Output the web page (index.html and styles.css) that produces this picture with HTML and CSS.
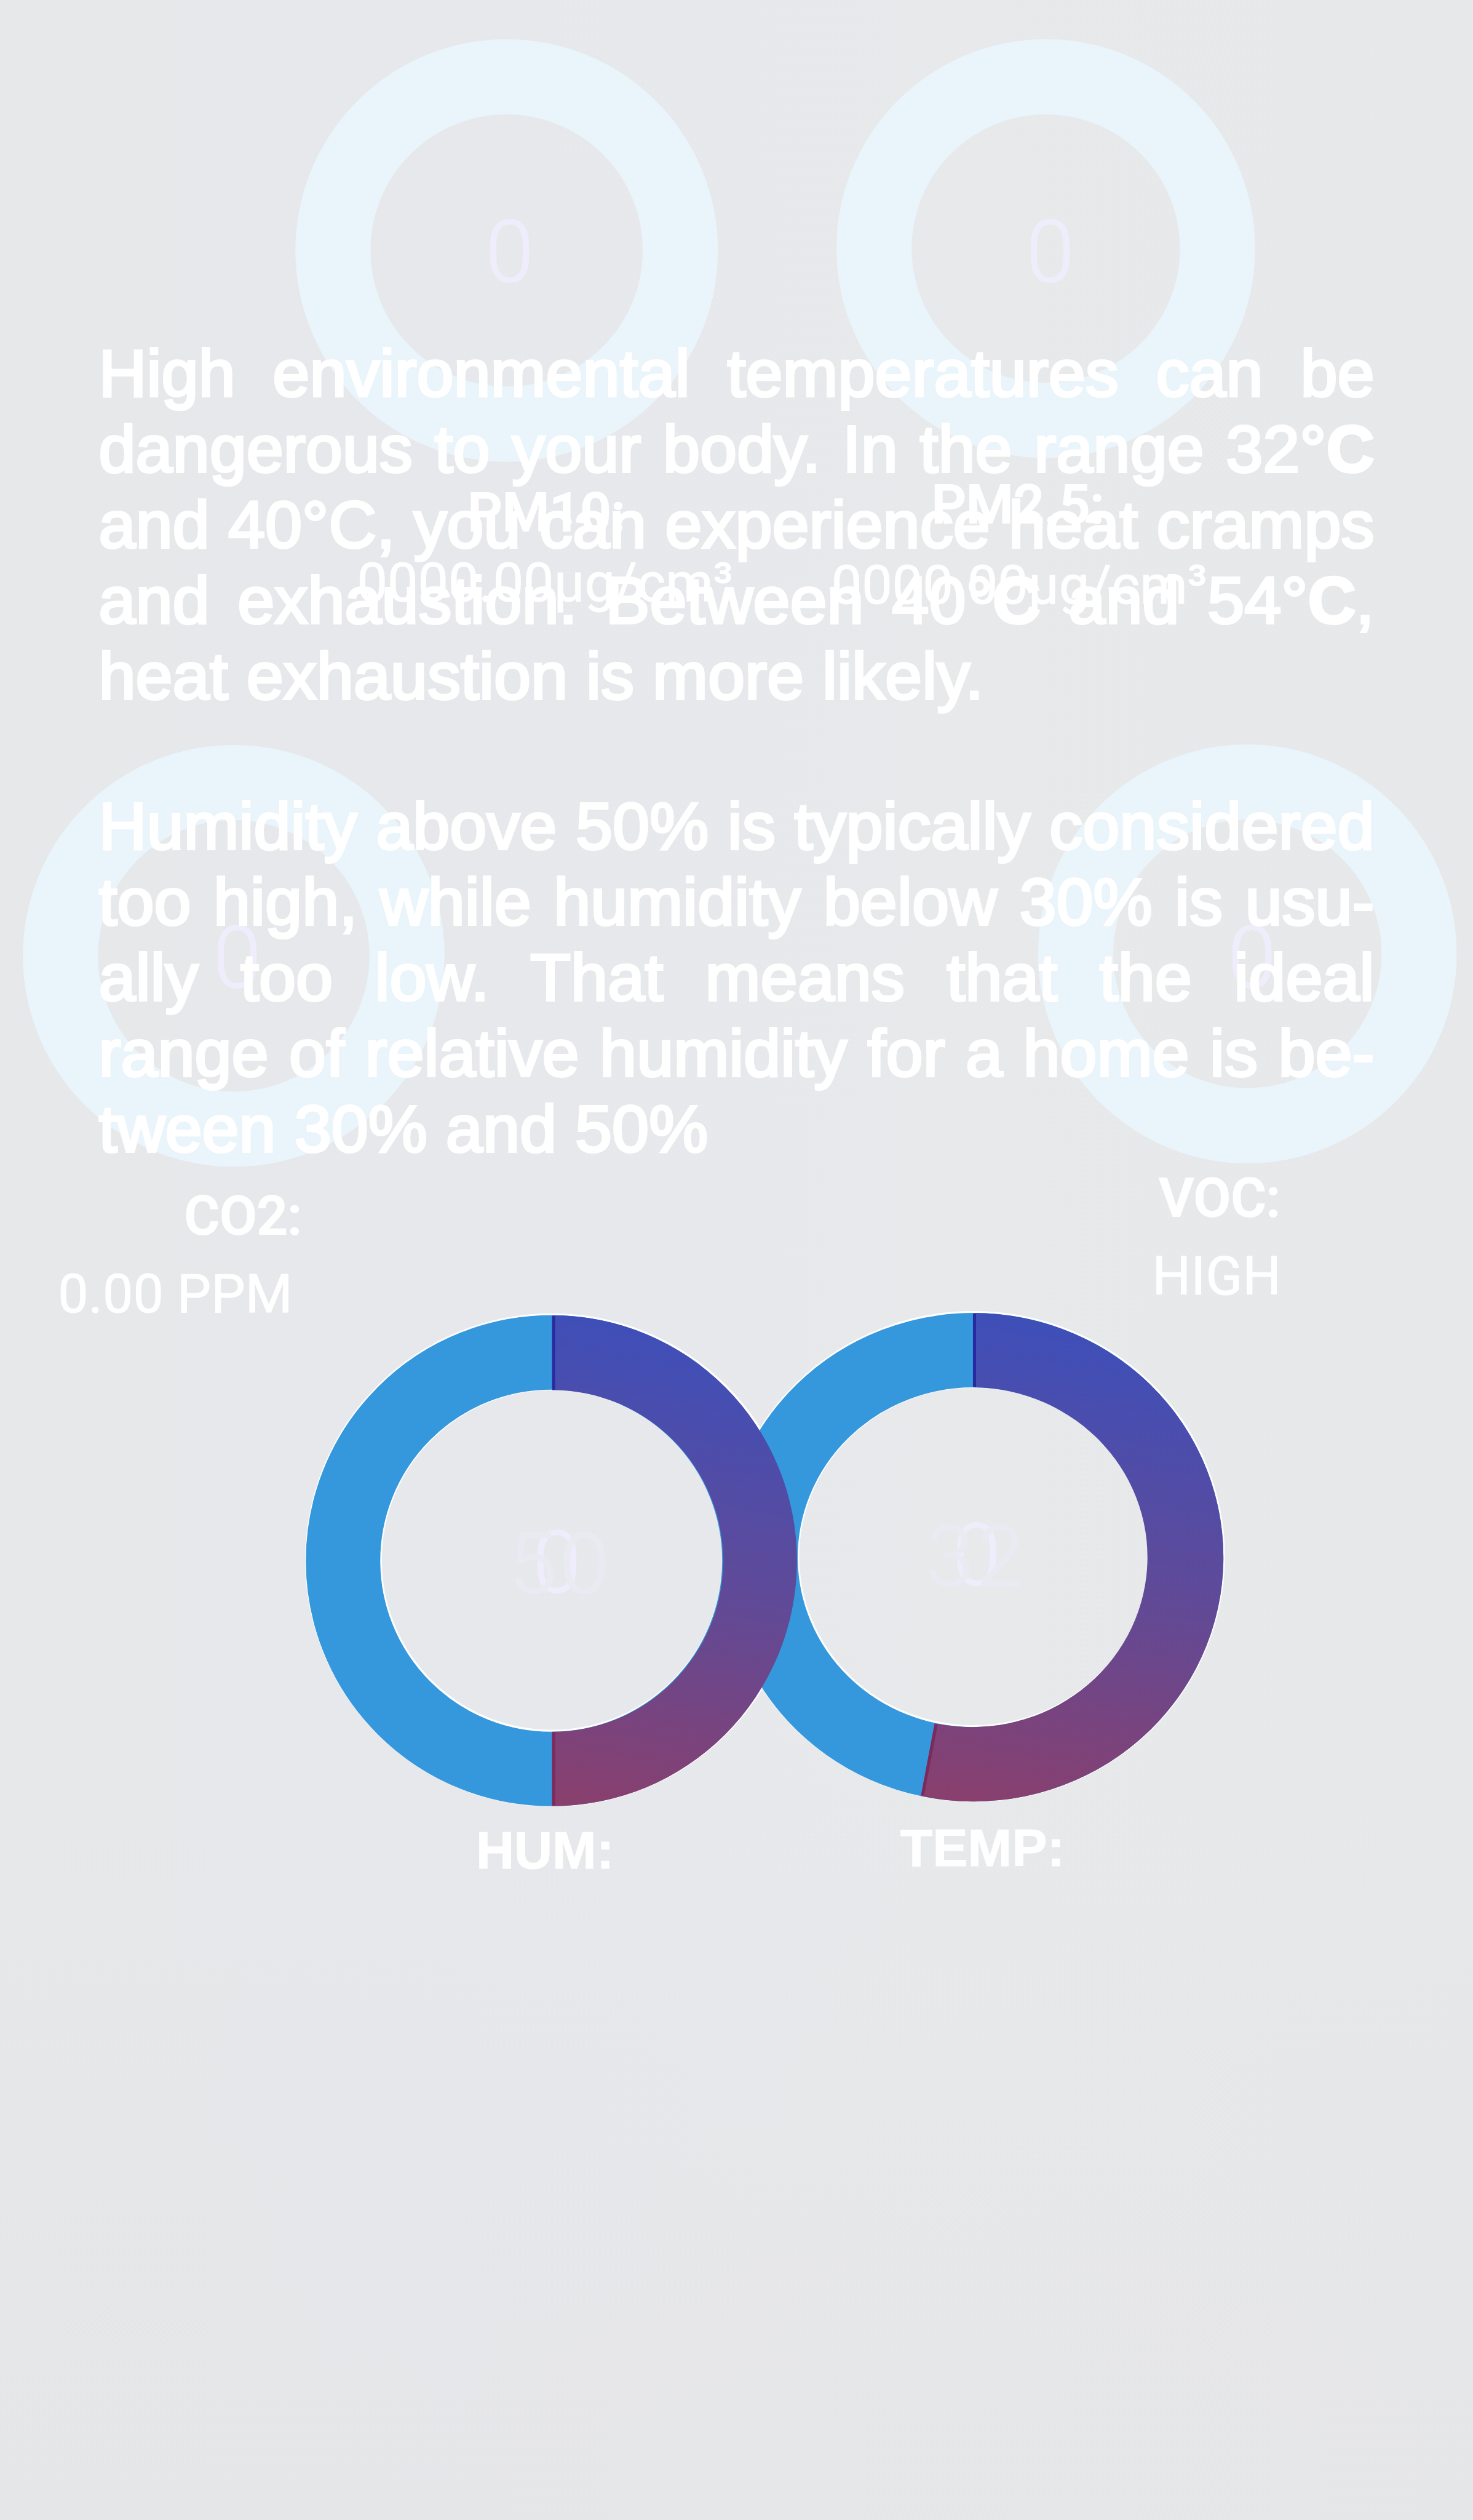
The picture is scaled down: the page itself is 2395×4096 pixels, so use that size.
FILE: index.html
```html
<!DOCTYPE html>
<html lang="en">
<head>
<meta charset="utf-8">
<title>Environment monitor</title>
<meta name="viewport" content="width=device-width, initial-scale=1">
<link rel="stylesheet" href="styles.css">
</head>
<body>
<main class="screen">
  <svg class="gauges" viewBox="0 0 3800 6500" aria-hidden="true">
    <defs>
      <linearGradient id="level" x1="0.1" y1="0" x2="0" y2="1">
        <stop offset="0" stop-color="#3f4fb8"/>
        <stop offset="0.5" stop-color="#604a98"/>
        <stop offset="1" stop-color="#8a3f6c"/>
      </linearGradient>
    </defs>
    <g class="pale">
      <circle cx="1307" cy="646" r="448"/>
      <circle cx="2698" cy="641" r="443"/>
      <circle cx="603" cy="2465" r="447"/>
      <circle cx="3218" cy="2460" r="443"/>
    </g>
    <g class="halo">
      <ellipse cx="2512" cy="4014" rx="549" ry="534"/>
      <ellipse cx="1424" cy="4023" rx="538" ry="537"/>
    </g>
    <ellipse class="track" cx="2511" cy="4016" rx="549" ry="534"/>
    <path fill="url(#level)" d="M2511 3386A645 630 0 1 1 2376 4632L2411 4444A453 438 0 1 0 2511 3578Z"/>
    <path class="seam" d="M2514 3389V3577"/>
    <path class="seam-end" d="M2380 4630L2415 4447"/>
    <ellipse class="track" cx="1422" cy="4025" rx="537" ry="537"/>
    <path fill="url(#level)" d="M1425 3392A631 633 0 0 1 1425 4658V4466A440 440 0 0 0 1425 3585Z"/>
    <path class="seam" d="M1428 3394V3584"/>
    <path class="seam-end" d="M1428 4467V4656"/>
  </svg>

  <section class="readings" aria-label="Sensors">
    <span class="zero pm10-zero">0</span>
    <span class="zero pm25-zero">0</span>
    <span class="zero co2-zero">0</span>
    <span class="zero voc-zero">0</span>
    <span class="zero hum-zero">0</span>
    <span class="zero temp-zero">0</span>
    <span class="level hum-level">50</span>
    <span class="level temp-level">32</span>
    <b class="name pm10-name">PM10:</b>
    <span class="value pm10-value">0000.00µg/cm³</span>
    <b class="name pm25-name">PM2.5:</b>
    <span class="value pm25-value">0000.00µg/cm³</span>
    <b class="name co2-name">CO2:</b>
    <span class="value co2-value">0.00 PPM</span>
    <b class="name voc-name">VOC:</b>
    <span class="value voc-value">HIGH</span>
    <b class="title hum-title">HUM:</b>
    <b class="title temp-title">TEMP:</b>
  </section>

  <article class="advice">
    <p>High environmental temperatures can be dangerous to your body. In the range 32°<b>C</b> and 40°C, you can experience heat cramps and exhaustion. Between 40°<b>C</b> and 54°<b>C</b>, heat exhaustion is more likely.</p>
    <p>Humidity above 50% is typically considered too high, while humidity below 30% is usu&shy;ally too low. That means that the ideal range of relative humidity for a home is be&shy;tween 30% and 50%</p>
  </article>
</main>
</body>
</html>
```
FILE: styles.css
```css
* { box-sizing: border-box; }

body {
  margin: 0;
  background: #e7e9eb;
}

.screen {
  position: relative;
  background:
    linear-gradient(180deg, transparent 70%, rgba(228, 228, 229, 0.5) 100%),
    linear-gradient(90deg, #e6e8e9 0%, #e7e8ec 30%, #e8e9eb 65%, #e7e8ea 100%);
  color: #fff;
  font-family: "Liberation Sans", Arial, sans-serif;
}

.gauges {
  display: block;
  width: 100%;
  height: auto;
}

.pale { fill: none; stroke: #e9f4fb; stroke-width: 194; }
.halo { fill: none; stroke: #fff; stroke-width: 198; }
.track { fill: none; stroke: #3598dc; stroke-width: 192; }
.seam { fill: none; stroke: #2a2aa0; stroke-width: 8; }
.seam-end { fill: none; stroke: #7c2a5c; stroke-width: 8; }

/* Readings are pinned on the gauge drawing, as shares of its width and height. */
.readings {
  position: absolute;
  inset: 0;
}

.readings > * {
  position: absolute;
  transform: translate(-50%, -50%);
  line-height: 1;
  white-space: nowrap;
}

.zero {
  font: 300 140px Roboto, sans-serif;
  color: #efedfb;
  -webkit-text-stroke: 2px #efedfb;
}

.level {
  font: 300 136px Inter, sans-serif;
  color: #eaeaf2;
  -webkit-text-stroke: 1px #eaeaf2;
}

.name {
  font: 500 88px Roboto, sans-serif;
  -webkit-text-stroke: 2px #fff;
}

.value {
  font: 400 88px Roboto, sans-serif;
  -webkit-text-stroke: 1px #fff;
}

.title {
  font: 700 86px "Liberation Sans", Arial, sans-serif;
  -webkit-text-stroke: 1px #fff;
}

.pm10-zero { left: 34.6%; top: 10%; }
.pm25-zero { left: 71.3%; top: 10%; }
.co2-zero { left: 16.1%; top: 38%; }
.voc-zero { left: 85%; top: 38%; }
.hum-zero { left: 37.8%; top: 62%; }
.temp-zero { left: 66.3%; top: 61.7%; }
.hum-level { left: 38%; top: 62%; }
.temp-level { left: 66.2%; top: 61.7%; }

.pm10-name { left: 37.1%; top: 20.3%; }
.pm10-value { left: 37%; top: 23.1%; }
.pm25-name { left: 69.1%; top: 20%; }
.pm25-value { left: 69.2%; top: 23.2%; }
.co2-name { left: 16.5%; top: 48.2%; }
.co2-value { left: 11.9%; top: 51.3%; }
.voc-name { left: 82.8%; top: 47.5%; }
.voc-value { left: 82.6%; top: 50.6%; }
.hum-title { left: 37%; top: 73.4%; }
.temp-title { left: 66.7%; top: 73.3%; }

/* The advice lies over the gauges. */
.advice {
  position: absolute;
  inset: 0;
  padding: 545px 6.7% 0;
  font-size: 108px;
  line-height: 123px;
  text-align: justify;
  -webkit-text-stroke: 4px #fff;
}

.advice p { margin: 0 0 121px; }
```
